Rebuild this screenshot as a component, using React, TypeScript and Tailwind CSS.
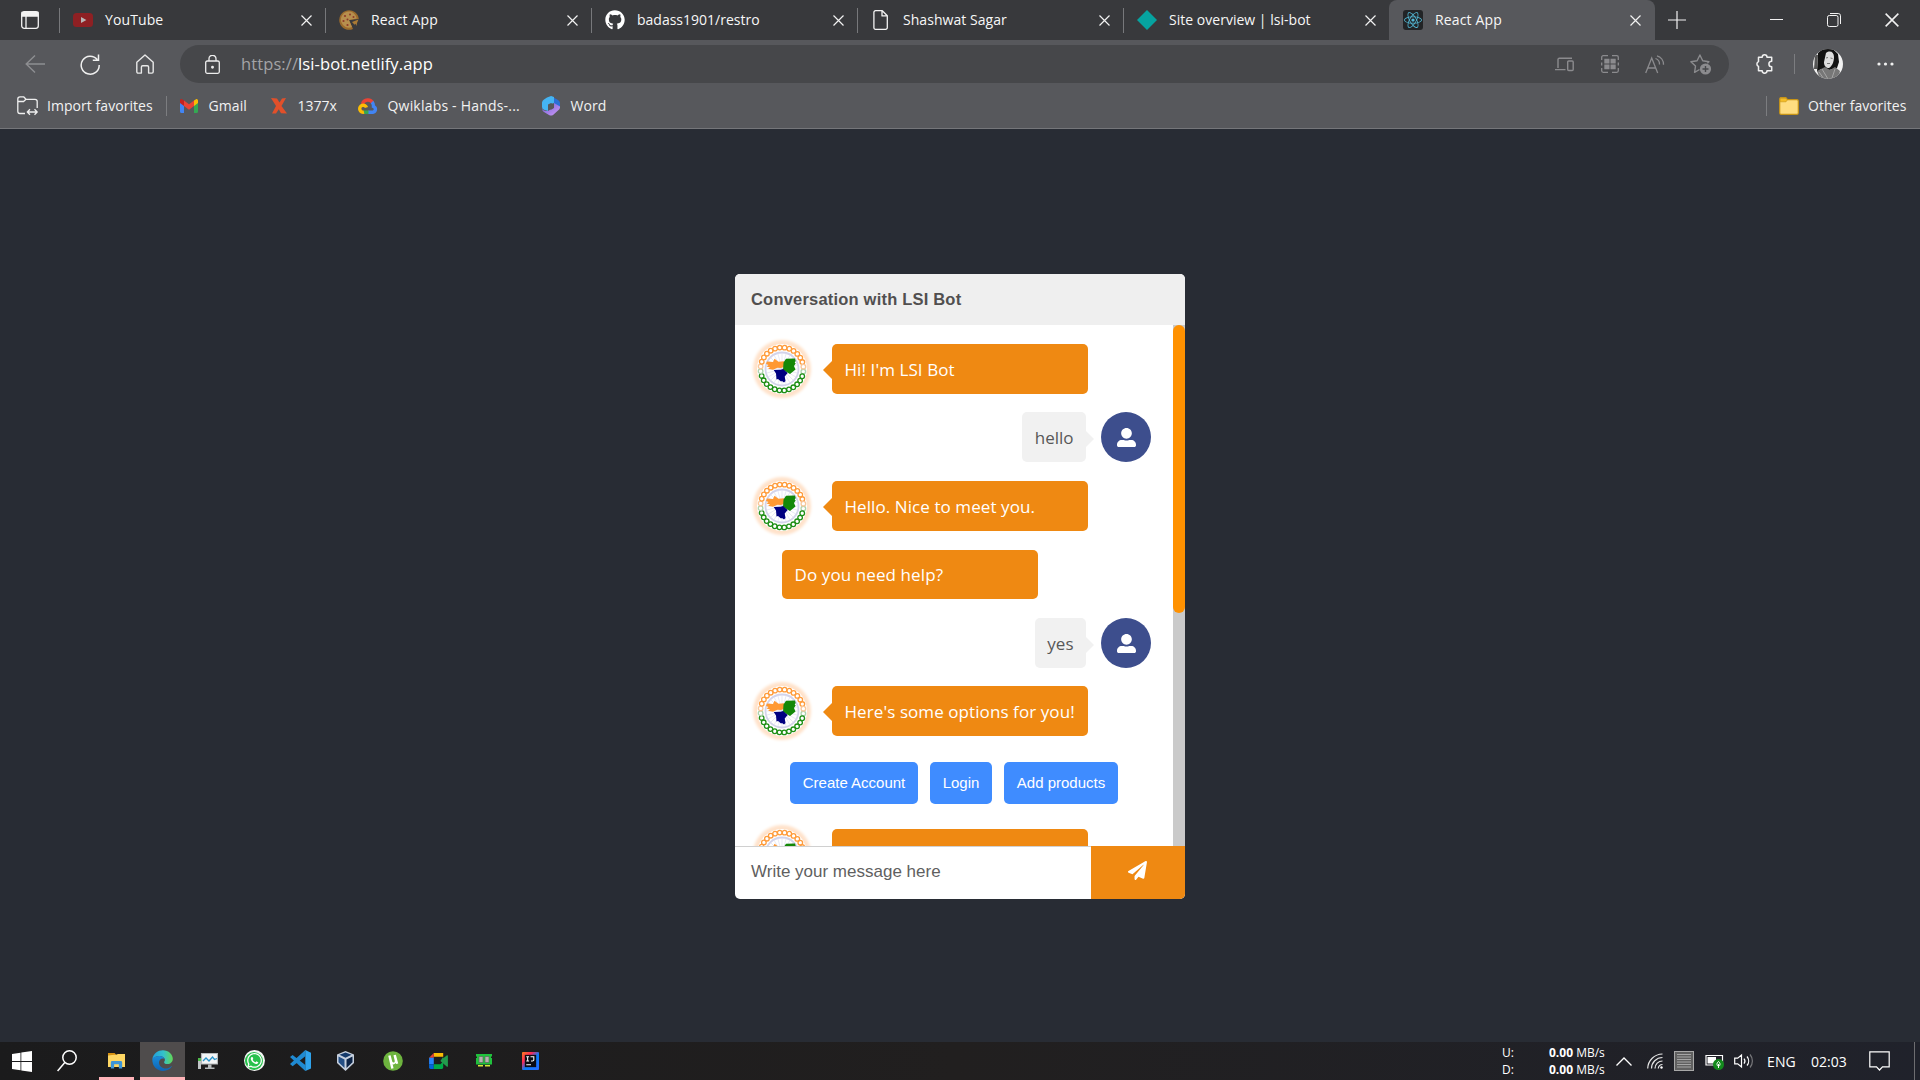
import React from "react";
import { FaGithub, FaPaperPlane, FaReact, FaWhatsapp } from "react-icons/fa";

type Kids = { children?: React.ReactNode };

/* ---------- small icons ---------- */

const Cross = ({ size = 11 }: { size?: number }) => (
  <svg width={size} height={size} viewBox="0 0 11 11" stroke="#f2f2f2" strokeWidth="1.2" fill="none">
    <path d="M.5.5l10 10M10.5.5l-10 10" />
  </svg>
);

const YouTubeIcon = () => (
  <svg width="20" height="20" viewBox="0 0 20 20">
    <rect y="3" width="20" height="14" rx="3.5" fill="#8e2023" />
    <path d="M8 7l5.4 3L8 13z" fill="#b9b5b5" />
  </svg>
);

const PizzaIcon = () => (
  <svg width="20" height="20" viewBox="0 0 20 20">
    <path d="M10 10l9.8-1A9.8 9.8 0 1 0 14 19z" fill="#9c6b2c" />
    <path d="M10 10l7.8-1.500A8 8 0 1 0 13 17z" fill="#b78f4e" />
    <g fill="#8f3a2a">
      <circle cx="6" cy="6" r="1.1" /><circle cx="11" cy="4.500" r="1" /><circle cx="4.500" cy="11" r="1.100" />
      <circle cx="8.500" cy="15" r="1.100" /><circle cx="14.500" cy="7" r="1" /><circle cx="8.500" cy="9.500" r="1" />
    </g>
    <path d="M13 12l6.500-2.500-1.500 3.500-.5 3-1-2.200-1 1z" fill="#a97a35" />
  </svg>
);

const FileIcon = () => (
  <svg width="20" height="20" viewBox="0 0 20 20" fill="none" stroke="#f2f2f2" strokeWidth="1.3" strokeLinejoin="round">
    <path d="M4.500.7h6.800l5 5v12a1.600 1.600 0 0 1-1.600 1.600H4.500A1.600 1.600 0 0 1 2.900 17.700V2.300A1.600 1.600 0 0 1 4.500.7zM11 .9v5h5" />
  </svg>
);

const DiamondIcon = () => (
  <svg width="20" height="20" viewBox="0 0 20 20"><path d="M10 0l10 10-10 10L0 10z" fill="#06a3a0" /></svg>
);

const ReactIcon = () => (
  <span className="flex h-5 w-5 items-center justify-center rounded-[3px] bg-[#222426]">
    <FaReact size={18} color="#53b9d6" />
  </span>
);

/* ---------- tabs ---------- */

type TabData = { icon: React.ReactNode; label: string; cls: string };
const tabs: TabData[] = [
  { icon: <YouTubeIcon />, label: "YouTube", cls: "tracking-[0.1px]" },
  { icon: <PizzaIcon />, label: "React App", cls: "tracking-[0.15px]" },
  { icon: <FaGithub size={20} color="#fff" />, label: "badass1901/restro", cls: "tracking-[0px]" },
  { icon: <FileIcon />, label: "Shashwat Sagar", cls: "tracking-[0.05px]" },
  { icon: <DiamondIcon />, label: "Site overview | lsi-bot", cls: "tracking-[0.02px]" },
];

const Tab = ({ icon, label, cls }: TabData) => (
  <div className="flex h-10 w-[266px] items-center">
    <span className="h-[25px] w-px bg-[#77787b]" />
    <span className="ml-[13px] flex w-5">{icon}</span>
    <span className={`ml-3 flex-1 whitespace-nowrap pb-px ${cls}`}>{label}</span>
    <span className="mr-[13px] mt-px"><Cross /></span>
  </div>
);

const TabBar = () => (
  <div className="flex h-10 bg-[#38393c] text-[14px] text-[#f7f7f7]">
    <div className="flex w-[59px] items-center pl-[21px]">
      <svg width="18" height="18" viewBox="0 0 18 18" fill="none" stroke="#f2f2f2" strokeWidth="1.300">
        <rect x=".7" y=".7" width="16.600" height="16.600" rx="2.500" />
        <path d="M1 1.500h16v3.500H1z" fill="#f2f2f2" />
        <path d="M5 5v12" />
      </svg>
    </div>
    {tabs.map((t) => <Tab key={t.label} {...t} />)}
    <div className="flex w-[266px] items-center rounded-t-lg bg-[#57585c]">
      <span className="ml-[14px]"><ReactIcon /></span>
      <span className="ml-3 flex-1 pb-px tracking-[0.15px]">React App</span>
      <span className="mr-[14px] mt-px"><Cross /></span>
    </div>
    <div className="flex flex-1 items-center pb-px">
      <svg className="ml-[13px]" width="18" height="18" viewBox="0 0 18 18" stroke="#f2f2f2" strokeWidth="1.200"><path d="M9 0v18M0 9h18" /></svg>
      <svg className="ml-[84px]" width="13" height="13" viewBox="0 0 13 13" stroke="#f2f2f2" strokeWidth="1"><path d="M0 6.500h13" /></svg>
      <svg className="ml-[44px]" width="14" height="14" viewBox="0 0 14 14" stroke="#f2f2f2" fill="none">
        <rect x=".5" y="2.500" width="10.500" height="11" rx="1.800" />
        <path d="M3 .5h8.200a2.300 2.300 0 0 1 2.300 2.300V11" />
      </svg>
      <span className="ml-[44px]"><Cross size={14} /></span>
    </div>
  </div>
);

/* ---------- toolbar ---------- */

const Toolbar = () => (
  <div className="flex h-[48px] items-center">
    <svg className="ml-[25px]" width="20" height="18" viewBox="0 0 20 18" fill="none" stroke="#8d8e91" strokeWidth="1.400"><path d="M10 .5L1.200 9l8.800 8.500M1 9h19" /></svg>
    <svg className="ml-[35px]" width="20" height="21" viewBox="0 0 20 21" fill="none" stroke="#f0f0f0" strokeWidth="1.500">
      <path d="M17.200 5.500A9 9 0 1 0 19.200 11M18.500 .5v5.700h-5.700" />
    </svg>
    <svg className="ml-[36px]" width="18" height="20" viewBox="0 0 18 20" fill="none" stroke="#e8e8e8" strokeWidth="1.400" strokeLinejoin="round">
      <path d="M.8 8.200L9 .9l8.200 7.300v9.600a1.300 1.300 0 0 1-1.300 1.300h-3.300V13a1.300 1.300 0 0 0-1.300-1.300H6.700A1.300 1.300 0 0 0 5.400 13v6.100H2.100A1.300 1.300 0 0 1 .8 17.800z" />
    </svg>
    <div className="ml-[26px] flex h-[38px] w-[1549px] items-center rounded-full bg-[#46474a] text-white">
      <svg className="ml-[25px]" width="15" height="19" viewBox="0 0 15 19" fill="none" stroke="#ededed" strokeWidth="1.300">
        <rect x=".7" y="6" width="13.600" height="12.300" rx="1.500" />
        <path d="M4 6V3.800a3.500 3.500 0 0 1 7 0V6" />
        <circle cx="7.500" cy="12.200" r=".8" fill="#ededed" />
      </svg>
      <span className="ml-[21px] whitespace-nowrap text-[16.500px] tracking-[0.1px]"><span className="text-[#a3a3a6]">https://</span>lsi-bot.netlify.app</span>
      <div className="ml-auto flex items-center pr-[17px]">
        <svg width="19" height="15" viewBox="0 0 19 15" fill="none" stroke="#8b8b8e" strokeWidth="1.400">
          <path d="M3 11V2.500A1.200 1.200 0 0 1 4.200 1.300H17M0 12.600h10.500" />
          <rect x="12.700" y="4" width="5.500" height="9.500" rx="1" />
        </svg>
        <svg className="ml-[27px]" width="18" height="18" viewBox="0 0 18 18" fill="none" stroke="#8b8b8e" strokeWidth="1.300">
          <path d="M.7 5V2.200A1.500 1.500 0 0 1 2.200.7H7M11 .7h4.800a1.500 1.500 0 0 1 1.500 1.500V5M17.300 7.500v3M.7 7.500v3M.7 13v2.800a1.500 1.500 0 0 0 1.500 1.500H7M11 17.300h4.800a1.500 1.500 0 0 0 1.500-1.500V13" />
          <path d="M3.300 3.700h5.200v4.800H3.300zM9.500 3.700h5.200v4.800H9.500zM3.300 9.500h5.200v4.800H3.300zM9.500 9.500h5.200v4.800H9.500z" fill="#8b8b8e" stroke="none" />
        </svg>
        <svg className="ml-[26px]" width="20" height="19" viewBox="0 0 20 19" fill="none" stroke="#8b8b8e" strokeWidth="1.300">
          <path d="M.7 18L6.700 3l6 15M2.500 13h8.400M10.500 3.500a6 6 0 0 1 4 6M12 .8a9 9 0 0 1 6.500 9" />
        </svg>
        <svg className="ml-[25px]" width="22" height="21" viewBox="0 0 22 21" fill="none" stroke="#8b8b8e" strokeWidth="1.400" strokeLinejoin="round">
          <path d="M9.500 15.500L4.600 18.300l.9-6.300-4.600-4.300 6.200-1L9.900 1l2.800 5.700 6.200 1-1.600 1.600" />
          <circle cx="15.500" cy="15" r="5.600" fill="#8b8b8e" stroke="none" />
          <path d="M15.500 12v6M12.500 15h6" stroke="#46474a" />
        </svg>
      </div>
    </div>
    <svg className="ml-[26px]" width="19" height="20" viewBox="0 0 19 20" fill="none" stroke="#f0f0f0" strokeWidth="1.500" strokeLinejoin="round">
      <path d="M3.500 3.200h3.700a2.400 2.400 0 0 1 4.800 0h4.700v4a2.600 2.600 0 1 0 0 5.600v4H12a2.400 2.400 0 0 1-4.800 0H3.500v-4.400a2.600 2.600 0 0 1 0-4.800z" />
    </svg>
    <span className="ml-[20px] h-5 w-px bg-[#7c7d80]" />
    <svg className="ml-[18px]" width="30" height="30" viewBox="0 0 30 30">
      <defs><clipPath id="face"><circle cx="15" cy="15" r="15" /></clipPath></defs>
      <g clipPath="url(#face)">
        <rect width="30" height="30" fill="#f1f1f1" />
        <path d="M5 4L9 0h11l5 5 1 8-2 6-8 2-8-1-4 3z" fill="#131313" />
        <path d="M2 6h3l-1 14H1z" fill="#555" />
        <path d="M13 4c4-3 8-1 8 4s-2 9-5 11c-3 0-5-2-5-6z" fill="#dedede" />
        <path d="M13 9l2-.5M17.500 9l2 .5M14 14.500h3" stroke="#777" strokeWidth="1" />
        <path d="M4 22l8-4 5 3 5-3 5 4-2 8H7z" fill="#777" />
        <path d="M9 20l6 10M6 23l5 7M22 20l-3 9" stroke="#a5a5a5" />
      </g>
    </svg>
    <svg className="ml-[34px]" width="17" height="4" viewBox="0 0 17 4" fill="#f0f0f0"><circle cx="2" cy="2" r="1.600" /><circle cx="8.500" cy="2" r="1.600" /><circle cx="15" cy="2" r="1.600" /></svg>
  </div>
);

/* ---------- bookmarks ---------- */

const Bookmarks = () => (
  <div className="flex h-[35px] items-center whitespace-nowrap text-[14px] text-[#f2f2f2]">
    <svg className="ml-[17px]" width="21" height="20" viewBox="0 0 21 20" fill="none" stroke="#efefef" strokeWidth="1.300" strokeLinejoin="round">
      <path d="M8 17.500H3A2.200 2.200 0 0 1 .8 15.300V3A2.200 2.200 0 0 1 3 .8h3.600L9 3.300h9A2.200 2.200 0 0 1 20.200 5.500V12M.8 5.500h5.800L9 3.300" />
      <path d="M10.500 16h9.500M13 13.300L10.300 16l2.700 2.700M17.500 13.300l2.700 2.700-2.700 2.700" />
    </svg>
    <span className="ml-[9px] w-[107px] pb-px tracking-[0.05px]">Import favorites</span>
    <span className="ml-[11.500px] h-5 w-px bg-[#7c7d80]" />
    <svg className="ml-[13px]" width="18" height="14" viewBox="0 0 18 14">
      <path d="M0 2v10.500A1.500 1.500 0 0 0 1.500 14H4V6z" fill="#4285f4" />
      <path d="M18 2v10.500a1.500 1.500 0 0 1-1.500 1.500H14V6z" fill="#34a853" />
      <path d="M14 1.500l2-1.200c1-.6 2 .2 2 1.500V4l-4 3z" fill="#fbbc04" />
      <path d="M4 1.500L2 .3C1-.3 0 .5 0 1.800V4l4 3z" fill="#c5221f" />
      <path d="M4 1.500l5 3.800 5-3.800V7l-5 3.800L4 7z" fill="#ea4335" />
    </svg>
    <span className="ml-[11px] w-[39px] pb-px tracking-[0.1px]">Gmail</span>
    <svg className="ml-[23px]" width="16" height="16" viewBox="0 0 16 16"><path d="M0 0l6 .5 2.500 4L11 .5 15 0l-4.500 8L16 15.500l-6-.3-2.200-4L5 15.500H1L5 8z" fill="#e2502a" /></svg>
    <span className="ml-[11px] w-[40px] pb-px">1377x</span>
    <svg className="ml-[20px]" width="20" height="16" viewBox="0 0 20 16" fill="none" strokeWidth="3.400">
      <path d="M4.500 6A5.600 5.600 0 0 1 14.800 5" stroke="#ea4335" />
      <path d="M14 4a5.600 5.600 0 0 1 1.500 4.500A3 3 0 0 1 15.200 14.200H10" stroke="#4285f4" />
      <path d="M10.500 14.200H5.500" stroke="#34a853" />
      <path d="M6 14.200A3.500 3.500 0 1 1 8.500 9.500" stroke="#fbbc04" />
    </svg>
    <span className="ml-[10px] w-[134px] pb-px tracking-[0.2px]">Qwiklabs - Hands-...</span>
    <svg className="ml-[20px]" width="18" height="20" viewBox="0 0 18 20">
      <defs><linearGradient id="wordLow" x1="0" y1="0" x2="1" y2="1"><stop stopColor="#6d5fd8" /><stop offset="1" stopColor="#d09af5" /></linearGradient></defs>
      <path d="M9 0l7 4a4 4 0 0 1 2 3v5l-6 1V7L8 4z" fill="#2b6fd6" />
      <path d="M5 1.500L9 0l3 1v6L6 9.500V15l-4-1.200A3 3 0 0 1 0 11V6.500A4 4 0 0 1 2 3.500z" fill="#45b4f2" />
      <path d="M0 12c0 2 3 3.500 6 3l6-3.800V7l6 3.500a4 4 0 0 1-2 4L11 19a4 4 0 0 1-4 0L2 16C.5 15 0 13.500 0 12z" fill="url(#wordLow)" />
      <path d="M6 8.500L9 7l3 1.500V12l-3 1.800L6 12z" fill="#57585c" />
    </svg>
    <span className="ml-[11px] pb-px tracking-[0.1px]">Word</span>
    <span className="ml-auto h-5 w-px bg-[#7c7d80]" />
    <svg className="ml-[12px]" width="20" height="18" viewBox="0 0 20 18">
      <path d="M.7 3V2A1.500 1.500 0 0 1 2.200.6h4.600L8.500 2.600h9.300a1.500 1.500 0 0 1 1.500 1.500V16a1.500 1.500 0 0 1-1.500 1.400H2.200A1.500 1.500 0 0 1 .7 16z" fill="#ffdd80" stroke="#c79416" strokeWidth="1.200" />
      <path d="M1.200 1.500h5.800l1.300 1.500L7 4.800H1.200z" fill="#f5bd27" stroke="#c79416" strokeWidth=".6" />
    </svg>
    <span className="ml-[9px] mr-[13px] w-[99px] pb-px">Other favorites</span>
  </div>
);

/* ---------- chat ---------- */

const links = Array.from({ length: 28 }, (_, i) => {
  const a = (i / 28) * Math.PI * 2 + 0.12;
  const y = 25 + 21.500 * Math.sin(a);
  return { a, x: 25 + 21.500 * Math.cos(a), y, c: y < 20 ? "#ff9c3c" : y < 24 ? "#f8c79b" : y < 28 ? "#aed3ae" : "#1f8f16" };
});
const spokes = Array.from({ length: 24 }, (_, i) => (i / 24) * Math.PI * 2);

const BotAvatar = () => (
  <div className="h-[50px] w-[50px] shrink-0 rounded-full bg-white shadow-[0_0_3px_4px_#ffe2ca]">
    <svg className="h-[50px] w-[50px]" viewBox="0 0 50 50" fill="none">
      <circle cx="25" cy="25" r="16.500" stroke="#d3d3ea" strokeWidth="1.800" />
      {spokes.map((a) => (
        <path key={a} d={`M25 25L${25 + 16 * Math.cos(a)} ${25 + 16 * Math.sin(a)}`} stroke="#dfdff1" strokeWidth=".7" />
      ))}
      {links.map((l) => <circle key={l.a} cx={l.x} cy={l.y} r="2.300" stroke={l.c} strokeWidth="1.300" />)}
      <path d="M10 17.500l6 .5 1.500-3.300 4 3 5.500-.5v5.500L24 24l-3.500-.3-4.500 2-5-1 2-1.200-3.500-1 2-1.500-2.500-1z" fill="#ff9933" />
      <path d="M26.500 18.500l2.500-3.800 9-.2.700 2.500-1 1.500 1 1L37 22l1.500 3.500L33 30l-2.500-1.500L26 26z" fill="#138808" />
      <path d="M16.700 26l7-.2L26 25l4.700 4-3 3.500.8 4.500-1.500 1.500-2-1.500-1 .5-3-2.500-1.500.5-.5-6z" fill="#000080" />
    </svg>
  </div>
);

const Bot = ({ children }: Kids) => (
  <div className="flex h-[50px] items-center pl-[22px]">
    <BotAvatar />
    <span className="ml-[16px] mt-[2px] border-y-[9px] border-r-[9px] border-y-transparent border-r-[#ef8912]" />
    <div className="flex h-[50px] w-[256px] items-center whitespace-nowrap rounded-[5px] bg-[#ef8912] px-[12.500px] pt-px text-[17px] tracking-[0.08px] text-white">{children}</div>
  </div>
);

const User = ({ children }: Kids) => (
  <div className="flex h-[50px] items-center justify-end pr-[22px] text-[#585858]">
    <div className="flex h-[50px] items-center rounded-[5px] bg-[#f1f1f1] px-[12.500px] pt-px text-[17px]">{children}</div>
    <span className="mt-1 border-y-[8px] border-l-[8px] border-y-transparent border-l-[#f1f1f1]" />
    <div className="ml-[7px] flex h-[50px] w-[50px] items-center justify-center rounded-full bg-[#3d4e8d]">
      <svg width="19" height="19" viewBox="0 0 512 512" fill="#fff">
        <path d="M256 288c79.500 0 144-64.500 144-144S335.500 0 256 0 112 64.500 112 144s64.500 144 144 144zm128 32h-55.100c-22.200 10.200-46.900 16-72.900 16s-50.600-5.800-72.900-16H128C57.300 320 0 377.300 0 448v16c0 26.500 21.500 48 48 48h416c26.500 0 48-21.500 48-48v-16c0-70.700-57.300-128-128-128z" />
      </svg>
    </div>
  </div>
);

const Chat = () => (
  <div className="flex h-[625px] w-[450px] flex-col overflow-hidden rounded-[5px] bg-white">
    <div className="flex h-[51px] shrink-0 items-center bg-[#efefef] pb-px pl-4 font-['Liberation_Sans',Arial,sans-serif] text-[16.500px] font-bold tracking-[0.2px] text-[#514f4f]">Conversation with LSI Bot</div>
    <div className="flex h-[521px] shrink-0 overflow-hidden">
      <div className="flex h-[560px] w-[438px] flex-col pt-[19px]">
        <Bot>Hi! I'm LSI Bot</Bot>
        <div className="mt-[18px]"><User>hello</User></div>
        <div className="mt-[19px]"><Bot>Hello. Nice to meet you.</Bot></div>
        <div className="ml-[47px] mt-[19px] flex h-[49px] w-[256px] shrink-0 items-center rounded-[5px] bg-[#ef8912] px-[12.500px] text-[17px] tracking-[0.1px] text-white">Do you need help?</div>
        <div className="mt-[19px]"><User>yes</User></div>
        <div className="mt-[18px]"><Bot>Here's some options for you!</Bot></div>
        <div className="ml-[55px] mt-[26px] flex h-[42px] shrink-0 gap-3 whitespace-nowrap font-['Liberation_Sans',Arial,sans-serif] text-[15px] text-white">
          <button className="w-[128px] rounded-[5px] bg-[#3f8cff]">Create Account</button>
          <button className="w-[62px] rounded-[5px] bg-[#3f8cff]">Login</button>
          <button className="w-[114px] rounded-[5px] bg-[#3f8cff]">Add products</button>
        </div>
        <div className="mt-[25px]"><Bot /></div>
      </div>
      <div className="h-full w-3 bg-[#cacaca]"><div className="h-[288px] rounded-full bg-[#ff9100]" /></div>
    </div>
    <div className="flex flex-1">
      <div className="flex w-[356px] items-center border-t border-[#d0d0d0] pb-[2px] pl-4 font-['Liberation_Sans',Arial,sans-serif] text-[17px] text-[#5f5f5f]">Write your message here</div>
      <div className="flex flex-1 items-center justify-center bg-[#ef8912] pb-[5px] pr-px"><FaPaperPlane size={19} color="#fff" /></div>
    </div>
  </div>
);

/* ---------- taskbar ---------- */

const Cell = ({ children }: Kids) => <span className="flex w-[46px] shrink-0 items-center justify-center pb-px">{children}</span>;

const Taskbar = () => (
  <div className="flex h-[38px] items-center bg-gradient-to-r from-[#1b1b1c] via-[#211f1f] to-[#20222b] text-white">
    <span className="flex w-[44px] justify-center">
      <svg width="20" height="21" viewBox="0 0 20 21" fill="#fff"><path d="M0 3l8.500-1.300V10H0zM9.300 1.600L20 0v10H9.300zM0 10.900h8.500v8.300L0 18zM9.300 10.900H20V21L9.300 19.400z" /></svg>
    </span>
    <span className="flex w-[46px] justify-center">
      <svg width="20" height="22" viewBox="0 0 20 22" fill="none" stroke="#fff" strokeWidth="1.500"><circle cx="12.500" cy="7.500" r="6.700" /><path d="M7.800 12.500L.6 21" /></svg>
    </span>
    <span className="ml-[9px] flex h-[38px] w-[35px] items-center justify-center border-b-[3px] border-[#ffb3b8] pr-px pt-px">
      <svg width="19" height="17" viewBox="0 0 19 18">
        <path d="M.5 1h7l2 2.500H.5z" fill="#d99311" />
        <path d="M.5 3.500L9 3l2-1h7.500v14H.500z" fill="#ffd763" />
        <path d="M3.500 17.500V11a1.500 1.500 0 0 1 1.500-1.500h9A1.500 1.500 0 0 1 15.500 11v6.500H12V13H7v4.500z" fill="#3d95d8" />
      </svg>
    </span>
    <span className="ml-[6px] flex h-[38px] w-[45px] items-center justify-center border-b-[3px] border-[#ffb3b8] bg-[#4f4c4c] pr-px pt-[2px]">
      <svg width="21" height="21" viewBox="0 0 21 21">
        <defs>
          <linearGradient id="edgeTop" x1="0" x2="1"><stop stopColor="#1f9fe0" /><stop offset=".55" stopColor="#35c1c9" /><stop offset="1" stopColor="#62d855" /></linearGradient>
          <linearGradient id="edgeLow" x1="0" y1="0" x2="0" y2="1"><stop stopColor="#1a8edb" /><stop offset="1" stopColor="#0f63b4" /></linearGradient>
        </defs>
        <path d="M.3 9C1.500 3.500 6 .2 10.800.2c6 0 10 4.300 10 8.500 0 3.200-2.300 5.300-5.300 5.300-2.700 0-3.400-1-3.400-1.800 0-.6.8-.9.8-2.200C12.900 7.600 10.500 6 7.500 6 4 6 1.500 7.600.3 9z" fill="url(#edgeTop)" />
        <path d="M.3 9C2 6.800 4.500 6 7.500 6c2.600 0 4.600 1 5.200 3-3-1.400-5.700.6-5.700 3.500 0 3.600 3.200 6 6.500 6 2.300 0 4.300-.8 5.700-2.300.4-.3.700 0 .5.400C18 19.500 14.700 20.900 11 20.900 5 20.900 0 16.200.3 9z" fill="url(#edgeLow)" />
      </svg>
    </span>
    <Cell>
      <svg width="20" height="20" viewBox="0 0 20 20">
        <path d="M0 7h3v11H0z" fill="#bfc3c6" /><path d="M0 7h3v3H0z" fill="#4fba4a" />
        <path d="M3.500 2.500h16v10.500H3.500z" fill="#f3f5f6" stroke="#b5b9bb" strokeWidth="1.200" />
        <path d="M5 10l3-3 3 3 3.500-4 2 2.500 2.500-1" fill="none" stroke="#2a93c9" strokeWidth="1.300" />
        <path d="M10 13.500h3.500v3h3V18H7v-1.500h3z" fill="#b5b9bb" />
      </svg>
    </Cell>
    <Cell>
      <span className="flex h-[21px] w-[21px] items-center justify-center rounded-full bg-[#f4f6f4]">
        <span className="flex h-[18px] w-[18px] items-center justify-center rounded-full bg-[#28c14c]"><FaWhatsapp size={17} color="#fff" /></span>
      </span>
    </Cell>
    <Cell>
      <svg width="21" height="21" viewBox="0 0 24 24"><path d="M17.500 0v7L3 18.500 0 16zM0 8l3-2.300L17.500 17v7z" fill="#1f8ad2" /><path d="M17.500 0L24 3v18l-6.500 3z" fill="#2fa3ec" /></svg>
    </Cell>
    <Cell>
      <svg className="-ml-px" width="17" height="20" viewBox="0 0 17 20"><path d="M8.500 0L17 3.500V12L8.500 20 0 12V3.500z" fill="#c6d0de" /><path d="M8.500 1.500l6 2.300-6 3-6-3z" fill="#153a6b" /><path d="M1.500 5.500l6 3V17l-6-5.700z" fill="#244f85" /><path d="M15.500 5.500l-6 3V17l6-5.700z" fill="#0c2447" /></svg>
    </Cell>
    <Cell>
      <svg className="ml-[2px]" width="20" height="20" viewBox="0 0 21 21"><circle cx="10.500" cy="10.500" r="10.300" fill="#6db33e" /><path d="M5.500 5l2.500-.5 1.700 6.500c.5 1.700 3 1.500 2.600-.8L11 4.500l2.500-.5 2.500 9-2.200.6-.5-1c-.7 1.200-2 1.600-3.200 1.400l1 4-2.500.6z" fill="#fff" /></svg>
    </Cell>
    <Cell>
      <svg className="ml-[1px]" width="19" height="16" viewBox="0 0 20 17"><path d="M5 0h10v4H5z" fill="#fbbc04" /><path d="M5 0v5H0z" fill="#ea4335" /><path d="M0 5h5v7H0z" fill="#2684fc" /><path d="M0 12h5v5H1.500A1.500 1.500 0 0 1 0 15.500z" fill="#0066da" /><path d="M5 12h7l3-3v6.500A1.500 1.500 0 0 1 13.500 17H5z" fill="#00ac47" /><path d="M15 4L12 8.500l7 6c.5.4 1 0 1-.5V3c0-.6-.6-.9-1-.5l-4 3z" fill="#239c4d" /></svg>
    </Cell>
    <Cell>
      <svg width="16" height="13" viewBox="0 0 16 13"><path d="M0 0h16v2.500h-1V4h1v6.500H0V4h1V2.500H0z" fill="#20c23c" /><path d="M3 2.500h4v6H3zM9 2.500h4v6H9z" fill="#b9b2b2" stroke="#5b6a5d" strokeWidth=".7" /><path d="M2 11h5v1.500H2zM9 11h5v1.500H9z" fill="#d7e83a" /></svg>
    </Cell>
    <Cell>
      <svg width="17" height="18" viewBox="0 0 18 19">
        <defs><linearGradient id="ij" x1="0" y1="0" x2="1" y2="1"><stop stopColor="#fc801d" /><stop offset=".3" stopColor="#fe2857" /><stop offset=".55" stopColor="#087cfa" /><stop offset="1" stopColor="#2a6bff" /></linearGradient></defs>
        <rect width="18" height="19" rx="1" fill="url(#ij)" /><rect x="3" y="3" width="12" height="13" fill="#0b0b12" />
        <path d="M4.500 5h3M6 5v4.500M4.500 9.500h3M9 5h3.500v3.500q0 1-1.500 1H9.500M4.500 13.500h5" stroke="#fff" strokeWidth="1.100" fill="none" />
      </svg>
    </Cell>
    <div className="ml-auto flex items-center whitespace-nowrap">
      <div className="w-[47px] text-[12px] leading-[17px]"><div>U:</div><div>D:</div></div>
      <div className="w-[58px] text-[12px] leading-[17px]"><div><b>0.00</b> MB/s</div><div><b>0.00</b> MB/s</div></div>
      <svg className="ml-[9px]" width="16" height="9" viewBox="0 0 16 9" fill="none" stroke="#fff" strokeWidth="1.300"><path d="M.5 8.500L8 1l7.500 7.500" /></svg>
      <svg className="ml-[15px]" width="16" height="16" viewBox="0 0 16 16" fill="none" stroke="#e6e6e6" strokeWidth="1.200"><path d="M.7 15.500A15 15 0 0 1 15.500 1M4.500 15.500a11 11 0 0 1 11-11M8 15.500A7.500 7.500 0 0 1 15.500 8M11.300 15.500a4 4 0 0 1 4.200-4" /><circle cx="14.500" cy="14.500" r="1.200" fill="#fff" stroke="none" /></svg>
      <svg className="mb-px ml-[11px]" width="20" height="20" viewBox="0 0 20 20"><rect x=".5" y=".5" width="19" height="19" fill="#606060" stroke="#a8a8a8" /><path d="M3 3.500h14M3 6h14M3 8.500h14M3 11h14M3 13.500h14M3 16h14" stroke="#a6a6a6" strokeWidth="1.200" /></svg>
      <svg className="ml-[11px] mt-[2px]" width="19" height="16" viewBox="0 0 19 16"><path d="M1 1.500h16.500v9.500H1z" fill="none" stroke="#fff" strokeWidth="1.200" /><path d="M2.500 3H11v6.500H2.500z" fill="#fff" /><circle cx="13.500" cy="10.500" r="5.500" fill="#138a1c" /><path d="M13.500 7.500c2 1.500 2 4 0 5-2-1-2-3.500 0-5zM13.500 10v4" stroke="#fff" fill="none" /></svg>
      <svg className="mb-px ml-[10px]" width="20" height="16" viewBox="0 0 20 16" fill="none" stroke="#fff" strokeWidth="1.200"><path d="M.7 5.200h3L7.500 2v12L3.700 10.800h-3zM10 5.500a4 4 0 0 1 0 5M13 3.500a7 7 0 0 1 0 9" /><path d="M16 1.500a10 10 0 0 1 0 13" stroke="#77777a" /></svg>
      <span className="ml-[13px] w-[31px] text-[14px] tracking-[0.1px]">ENG</span>
      <span className="ml-[13px] w-[37px] text-[14px]">02:03</span>
      <svg className="ml-[21px]" width="21" height="20" viewBox="0 0 21 20" fill="none" stroke="#fff" strokeWidth="1.200"><path d="M.8.8h19.400v15H13.500L10.500 19l-3-3.200H.8z" /></svg>
      <span className="ml-[24px] mr-[5px] h-[38px] w-px bg-[#6d6d70]" />
    </div>
  </div>
);

export default function App() {
  return (
    <div className="flex h-[1080px] w-[1920px] flex-col overflow-hidden bg-[#282c34] font-['Open_Sans','Noto_Sans',sans-serif]">
      <TabBar />
      <div className="h-[89px] border-b border-[#75767a] bg-[#57585c]">
        <Toolbar />
        <Bookmarks />
      </div>
      <div className="flex flex-1 justify-center pt-[145px]"><Chat /></div>
      <Taskbar />
    </div>
  );
}
